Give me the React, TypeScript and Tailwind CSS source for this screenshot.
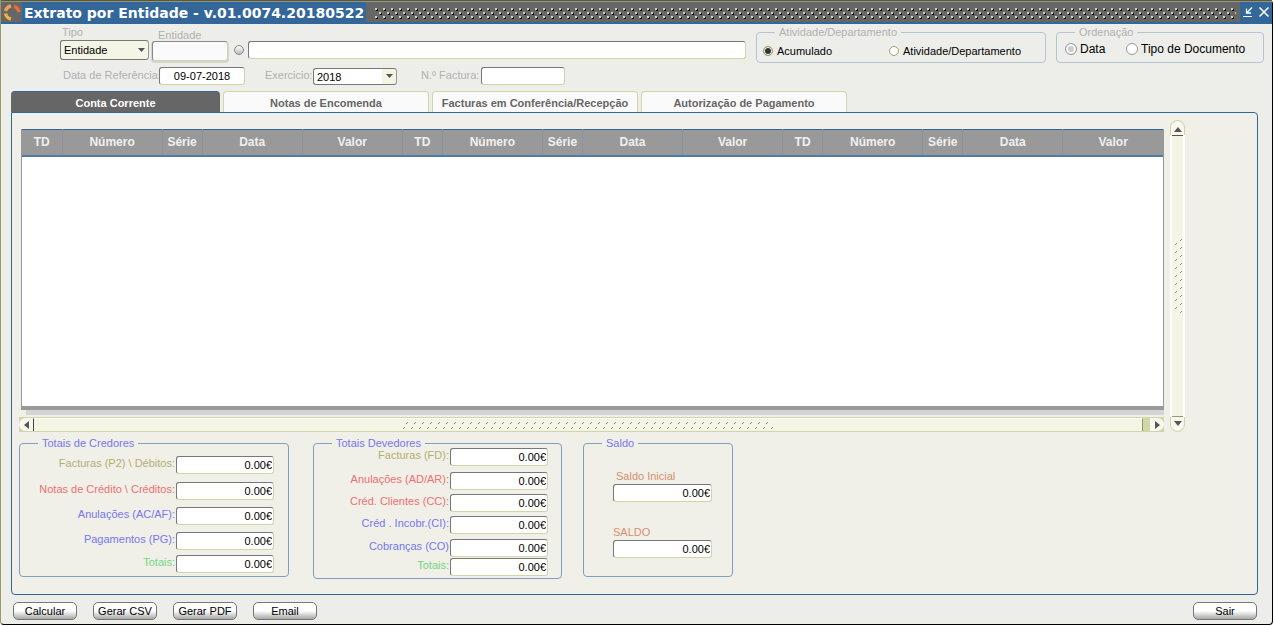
import React from "react";

const FIELD =
  "h-[18px] rounded-[3px] border border-t-[#777] border-l-[#777] border-r-[#d0d5aa] border-b-[#d0d5aa] bg-white px-1 text-[11px] leading-4 text-black outline-none";

const COLUMNS = ["TD", "Número", "Série", "Data", "Valor"];
const GROUPS = [0, 1, 2];

function Total({ id, label, color, gap }: { id: string; label: string; color: string; gap: string }) {
  return (
    <div className={`flex h-[18px] items-center justify-end gap-px ${gap}`}>
      <label htmlFor={id} className={`-mt-1 whitespace-nowrap ${color}`}>{label}</label>
      <input id={id} defaultValue="0.00€" className={`${FIELD} w-[98px] pr-px text-right`} />
    </div>
  );
}

function Action({ children }: { children: React.ReactNode }) {
  return (
    <button className="h-[18px] w-16 rounded-[5px] border border-[#777] bg-linear-to-b from-white from-50% to-[#a8a8a8] text-[11px] leading-4 whitespace-nowrap text-black">
      {children}
    </button>
  );
}

function TitleBar() {
  return (
    <header className="flex h-6 border-t border-b-2 border-t-[#555] border-b-[#336699] bg-[#666]">
      <div className="flex w-full border-t border-[#999966]">
        <svg className="h-5 w-[21px] shrink-0" viewBox="0 0 21 20" fill="none" strokeWidth="3.4">
          <path d="M4.5 9Q5.500 5 10 4" stroke="#f0a050" />
          <path d="M13 4.500Q17 5.500 18 10" stroke="#e87038" />
          <path d="M4.500 11.500Q5.500 16 10 17" stroke="#f0b040" />
        </svg>
        <h1 className="bg-[#336699] px-0.5 font-['DejaVu_Sans',sans-serif] text-[14px] leading-[22px] font-bold whitespace-nowrap text-white">
          Extrato por Entidade - v.01.0074.20180522
        </h1>
        <svg className="ml-2 h-5 min-w-0 flex-1">
          <defs>
            <pattern id="grip" width="8" height="8" y="6" patternUnits="userSpaceOnUse">
              <path d="M2 1h2v2H2zM6 5h2v2H6z" fill="#000" />
              <path d="M1 0h2v2H1zM5 4h2v2H5z" fill="#d0d5aa" />
            </pattern>
          </defs>
          <rect y="6" width="100%" height="11" fill="url(#grip)" />
        </svg>
        <div className="ml-1 flex w-8 shrink-0 items-center justify-around bg-[#336699] text-white">
          <button aria-label="Minimizar">
            <svg width="12" height="12" viewBox="0 0 12 12" stroke="currentColor" fill="none"><path d="M1 10.500h9" /><path d="M10 1.500L5 6.500M4.500 2.500v4.500H9" strokeWidth="1.300" /></svg>
          </button>
          <button aria-label="Fechar">
            <svg width="12" height="12" viewBox="0 0 12 12" stroke="currentColor" strokeWidth="1.500"><path d="M1.500 1.500l9 9M10.500 1.500l-9 9" /></svg>
          </button>
        </div>
      </div>
    </header>
  );
}

function Select({ id, value, className }: { id: string; value: string; className: string }) {
  return (
    <div className={`relative ${className}`}>
      <select id={id} className="h-full w-full appearance-none rounded-[3px] border border-t-[#777] border-r-[#999] border-b-[#777] border-l-[#777] bg-transparent pl-[3px] text-[11px] leading-4 text-black outline-none">
        <option>{value}</option>
      </select>
      <svg className="pointer-events-none absolute right-1 bottom-1/2 h-1 w-[7px] translate-y-1/2" viewBox="0 0 7 4"><path d="M0 0h7L3.5 4z" fill="#555" /></svg>
    </div>
  );
}

function Filters() {
  return (
    <form className="flex h-[67px] gap-2.5 pr-2">
      <div className="flex min-w-0 flex-1 flex-col pl-[59px]">
        <div className="flex h-[37px]">
          <div className="mr-[3px] flex w-[89px] flex-col">
            <label htmlFor="tipo" className="h-4 pl-0.5 leading-4">Tipo</label>
            <Select id="tipo" value="Entidade" className="h-5 rounded-[3px] bg-[#f5f5e5]" />
          </div>
          <div className="mr-1.5 flex w-[76px] flex-col pt-1.5">
            <label htmlFor="entidade" className="h-[11px] pl-1.5 leading-[11px]">Entidade</label>
            <input id="entidade" className="h-5 w-full rounded-[3px] border border-t-[#888] border-r-[#d0d5aa] border-b-[#d0d5aa] border-l-[#888] bg-[#fafafa] shadow-[0_1px_0_1px_#d4d4d0] outline-none" />
          </div>
          <button type="button" aria-label="Procurar" className="mt-[21px] mr-1 size-2.5 shrink-0 rounded-full border border-[#888] bg-linear-to-b from-white to-[#bbb]" />
          <input aria-label="Nome da entidade" className={`${FIELD} mt-[17px] min-w-0 flex-1`} />
        </div>
        <div className="flex items-center pt-1.5 pl-[3px]">
          <label htmlFor="ref" className="-mt-0.5 w-24 whitespace-nowrap">Data de Referência:</label>
          <input id="ref" defaultValue="09-07-2018" className={`${FIELD} w-[86px] text-center`} />
          <label htmlFor="ano" className="-mt-0.5 ml-5 w-12 whitespace-nowrap">Exercicio:</label>
          <Select id="ano" value="2018" className="h-[17px] w-[84px] rounded-[3px] bg-linear-to-r from-white from-82% to-[#f5f5e5] to-82%" />
          <label htmlFor="fac" className="-mt-0.5 ml-6 w-[60px] whitespace-nowrap">N.º Factura:</label>
          <input id="fac" className={`${FIELD} w-[84px]`} />
        </div>
      </div>
      <fieldset className="mt-[1px] flex h-[38px] w-[290px] shrink-0 items-center rounded-[4px] border border-[#b4c4d4] px-1.5 text-black">
        <legend className="ml-3 px-1 leading-[14px] text-[#b0b0b0]">Atividade/Departamento</legend>
        <div className="flex h-[22px] items-center">
          <label className="flex w-[126px] items-center gap-1"><input type="radio" name="act" defaultChecked className="size-[10px] appearance-none rounded-full border border-[#a0a070] bg-white checked:bg-[#333] checked:shadow-[inset_0_0_0_1px_#fff]" />Acumulado</label>
          <label className="flex items-center gap-1"><input type="radio" name="act" className="size-[10px] appearance-none rounded-full border border-[#a0a070] bg-white checked:bg-[#333] checked:shadow-[inset_0_0_0_1px_#fff]" />Atividade/Departamento</label>
        </div>
      </fieldset>
      <fieldset className="mt-[1px] h-[38px] w-[208px] shrink-0 rounded-[4px] border border-[#b4c4d4] px-2 text-black">
        <legend className="ml-2.5 px-1 leading-[14px] text-[#b0b0b0]">Ordenação</legend>
        <div className="flex h-5 items-center text-[12px]">
          <label className="flex w-[61px] items-center gap-[3px]"><input type="radio" name="ord" defaultChecked className="size-3 appearance-none rounded-full border border-[#999] bg-white checked:bg-[#ccc] checked:shadow-[inset_0_0_0_2px_#fff]" />Data</label>
          <label className="flex items-center gap-[3px] whitespace-nowrap"><input type="radio" name="ord" className="size-3 appearance-none rounded-full border border-[#999] bg-white checked:bg-[#ccc] checked:shadow-[inset_0_0_0_2px_#fff]" />Tipo de Documento</label>
        </div>
      </fieldset>
    </form>
  );
}

function Tabs() {
  const idle = "h-[21px] w-[206px] rounded-t-[4px] border border-b-0 border-[#d0d5aa] bg-[#fafafa] pt-0.5 text-[#666] whitespace-nowrap";
  return (
    <nav className="flex gap-[3px] pl-2.5 text-[11px] font-bold">
      <button className="h-[21px] w-[209px] rounded-t-[4px] border-t border-[#336699] bg-[#666] pt-0.5 text-white">Conta Corrente</button>
      <button className={idle}>Notas de Encomenda</button>
      <button className={idle}>Facturas em Conferência/Recepção</button>
      <button className={idle}>Autorização de Pagamento</button>
    </nav>
  );
}

function Ledger() {
  return (
    <div className="flex gap-1.5 pr-[72px] pl-[7px]">
      <div className="min-w-0 flex-1 pt-[9px]">
        <div className="ml-0.5 h-[281px] border-r border-b-4 border-l border-[#999] bg-white">
          <table className="w-full table-fixed border-collapse bg-[#999]">
            <colgroup>
              {GROUPS.map((g) => (
                <React.Fragment key={g}>
                  <col className="w-[40px]" /><col className="w-[100px]" /><col className="w-[40px]" /><col className="w-[100px]" /><col className="w-[100px]" />
                </React.Fragment>
              ))}
            </colgroup>
            <thead>
              <tr className="h-[26px] border-t border-b-2 border-t-[#336699] border-b-[#4f7ba7]">
                {GROUPS.map((g) => COLUMNS.map((c) => (
                  <th key={g + c} className="border-r border-[#8a93a0] p-0 text-center text-[12px] leading-4 font-bold text-[#f0f0f0] last:border-r-0">{c}</th>
                )))}
              </tr>
            </thead>
          </table>
        </div>
        <div className="ml-[7px] h-[5px] bg-[#d4d4d4]" />
        <div className="mt-0.5 flex h-[15px] items-stretch border-y border-[#d0d5aa] bg-[#d0d5aa]">
          <button aria-label="Anterior" className="flex w-3.5 items-center justify-center rounded-l-full bg-[#f8f8ee]"><svg width="5" height="8" viewBox="0 0 5 8"><path d="M5 0v8L0 4z" fill="#555" /></svg></button>
          <div className="flex flex-1 items-center justify-center border-t border-r border-l border-t-white border-r-[#999966] border-l-[#444] bg-[#f5f5e5]">
            <svg className="h-2 w-[372px]">
              <defs><pattern id="hgrip" width="8" height="8" patternUnits="userSpaceOnUse">
                <path d="M5 1h1v1H5zM4 2h1v1H4zM2 6h1v1H2zM1 7h1v1H1z" fill="#999966" />
                <path d="M4 0h1v1H4zM3 1h1v1H3zM1 5h1v1H1zM0 6h1v1H0z" fill="#fff" />
              </pattern></defs>
              <rect width="100%" height="8" fill="url(#hgrip)" />
            </svg>
          </div>
          <button aria-label="Seguinte" className="ml-[7px] flex w-3.5 items-center justify-center rounded-r-full bg-[#f8f8ee]"><svg width="5" height="8" viewBox="0 0 5 8"><path d="M0 0v8L5 4z" fill="#555" /></svg></button>
        </div>
      </div>
      <div className="flex w-[15px] flex-col">
        <button aria-label="Subir" className="flex h-[15px] items-center justify-center rounded-t-full border border-b-0 border-[#d0d5aa] bg-[#f8f8ee] pt-0.5"><svg width="8" height="5" viewBox="0 0 8 5"><path d="M0 5h8L4 0z" fill="#555" /></svg></button>
        <div className="flex flex-1 items-center justify-center border-x-2 border-white bg-[#f5f5e5]">
          <div className="flex h-full w-full items-center justify-center border-t border-b border-t-[#555] border-b-[#999966]">
            <svg className="h-[76px] w-2">
              <defs><pattern id="vgrip" width="8" height="8" patternUnits="userSpaceOnUse">
                <path d="M7 1h1v1H7zM6 2h1v1H6zM2 5h1v1H2zM1 6h1v1H1z" fill="#999966" />
                <path d="M6 0h1v1H6zM5 1h1v1H5zM1 4h1v1H1zM0 5h1v1H0z" fill="#fff" />
              </pattern></defs>
              <rect width="8" height="76" fill="url(#vgrip)" />
            </svg>
          </div>
        </div>
        <button aria-label="Descer" className="flex h-[15px] items-center justify-center rounded-b-full border border-t-0 border-[#d0d5aa] bg-[#f8f8ee] pb-0.5"><svg width="8" height="5" viewBox="0 0 8 5"><path d="M0 0h8L4 5z" fill="#555" /></svg></button>
      </div>
    </div>
  );
}

function Totals() {
  const box = "rounded-[4px] border border-[#7f9fc0]";
  const legend = "ml-[18px] px-1 leading-[14px] text-[#7777ee]";
  return (
    <div className="mt-1 flex items-start pl-[7px]">
      <fieldset className={`${box} h-[141px] w-[270px] pr-3.5`}>
        <legend className={legend}>Totais de Credores</legend>
        <Total id="c1" label={"Facturas (P2) \\ Débitos:"} color="text-[#b4b070]" gap="mt-1.5" />
        <Total id="c2" label={"Notas de Crédito \\ Créditos:"} color="text-[#f07070]" gap="mt-2" />
        <Total id="c3" label="Anulações (AC/AF):" color="text-[#7777ee]" gap="mt-[7px]" />
        <Total id="c4" label="Pagamentos (PG):" color="text-[#7777ee]" gap="mt-[7px]" />
        <Total id="c5" label="Totais:" color="text-[#70d880]" gap="mt-[5px]" />
      </fieldset>
      <fieldset className={`${box} ml-6 h-[143px] w-[249px] pr-[13px]`}>
        <legend className={legend}>Totais Devedores</legend>
        <Total id="d1" label="Facturas (FD):" color="text-[#b4b070]" gap="-mt-0.5" />
        <Total id="d2" label="Anulações (AD/AR):" color="text-[#f07070]" gap="mt-1.5" />
        <Total id="d3" label="Créd. Clientes (CC):" color="text-[#f07070]" gap="mt-1" />
        <Total id="d4" label="Créd . Incobr.(CI):" color="text-[#7777ee]" gap="mt-1" />
        <Total id="d5" label="Cobranças (CO)" color="text-[#7777ee]" gap="mt-[5px]" />
        <Total id="d6" label="Totais:" color="text-[#70d880]" gap="mt-px" />
      </fieldset>
      <fieldset className={`${box} ml-[21px] h-[141px] w-[150px] pl-[29px] text-[#d8906f]`}>
        <legend className="-ml-[11px] px-1 leading-[14px] text-[#7777ee]">Saldo</legend>
        <label htmlFor="s1" className="mt-[18px] block pl-[3px] leading-4">Saldo Inicial</label>
        <input id="s1" defaultValue="0.00€" className={`${FIELD} block w-[99px] pr-px text-right`} />
        <label htmlFor="s2" className="mt-[22px] block leading-4">SALDO</label>
        <input id="s2" defaultValue="0.00€" className={`${FIELD} block w-[99px] pr-px text-right`} />
      </fieldset>
    </div>
  );
}

export default function App() {
  return (
    <div className="bg-white pr-px font-['Liberation_Sans',Arial,sans-serif] text-[11px] leading-[14px] text-[#b0b0b0]">
      <main className="rounded-[4px] rounded-tl-none border-r border-b border-l border-r-black border-b-black border-l-[#999966] bg-[#edeeea]">
        <TitleBar />
        <Filters />
        <Tabs />
        <section className="mr-3.5 ml-2.5 h-[483px] rounded-[4px] rounded-tl-none border border-[#336699] bg-[#f0efe8] pt-[7px]">
          <Ledger />
          <Totals />
        </section>
        <footer className="flex gap-4 pt-[7px] pr-[15px] pb-1 pl-3">
          <Action>Calcular</Action>
          <Action>Gerar CSV</Action>
          <Action>Gerar PDF</Action>
          <Action>Email</Action>
          <div className="ml-auto"><Action>Sair</Action></div>
        </footer>
      </main>
    </div>
  );
}
